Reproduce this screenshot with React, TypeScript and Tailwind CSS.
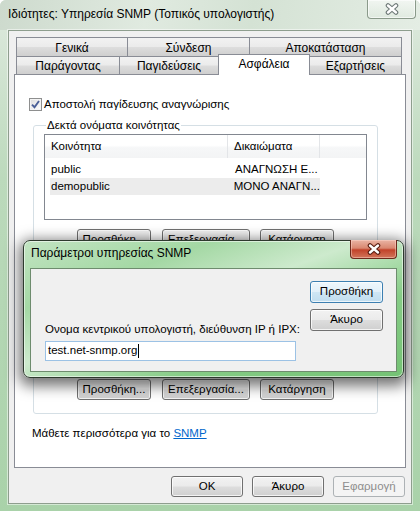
import React from "react";

const FONT = "font-['Liberation_Sans','Noto_Sans',sans-serif]";

const btn =
  "flex items-center justify-center rounded-[3px] border border-[#707070] bg-[linear-gradient(to_bottom,#f2f2f2_0%,#ebebeb_48%,#dddddd_52%,#cfcfcf_100%)] shadow-[inset_0_0_0_1px_rgba(255,255,255,0.75)] text-[11.5px] leading-none text-black whitespace-nowrap";

function XGlyph({ outline }: { outline: string }) {
  return (
    <svg width="14" height="12" viewBox="0 0 14 12">
      <path d="M3 2.5 L11 9.5 M11 2.5 L3 9.5" stroke={outline} strokeWidth="4.6" strokeLinecap="round" fill="none" />
      <path d="M3 2.5 L11 9.5 M11 2.5 L3 9.5" stroke="#ffffff" strokeWidth="2.4" strokeLinecap="round" fill="none" />
    </svg>
  );
}

function Tab({ label, w, first, selected }: { label: string; w: string; first?: boolean; selected?: boolean }) {
  if (selected) {
    return (
      <div
        className={`relative z-10 -ml-px -mt-[2px] flex h-[21px] ${w} items-start justify-center border-x border-t border-[#898c95] bg-white pt-[2px] text-[12px] leading-[15px]`}
      >
        {label}
      </div>
    );
  }
  return (
    <div
      className={`${first ? "" : "-ml-px"} flex h-full ${w} items-center justify-center border-x border-t border-[#898c95] bg-[linear-gradient(to_bottom,#f2f2f2_0%,#ebebeb_48%,#dddddd_52%,#cfcfcf_100%)] pt-[1px] text-[12px] leading-none`}
    >
      {label}
    </div>
  );
}

function ButtonRow() {
  return (
    <div className="ml-[33px] flex h-[21px]">
      <div className={`${btn} w-[74px]`}>Προσθήκη...</div>
      <div className={`${btn} ml-[11px] w-[88px]`}>Επεξεργασία...</div>
      <div className={`${btn} ml-[10px] w-[74px]`}>Κατάργηση</div>
    </div>
  );
}

export default function App() {
  return (
    <div
      className={`relative h-[511px] w-[420px] overflow-hidden rounded-t-[6px] ${FONT} text-[11.5px] text-black bg-[linear-gradient(to_bottom,#d2e0d2_0%,#d9e7d9_6%,#bcdabc_35%,#a9d2a9_100%)]`}
    >
      {/* title bar */}
      <div className="flex h-[30px] items-start justify-between bg-[linear-gradient(100deg,#cddacd_0%,#e0eae0_35%,#d4e2d4_60%,#e4ede4_100%)]">
        <div className="whitespace-nowrap pl-[8px] pt-[7px] text-[12px] leading-[15px]">
          Ιδιότητες: Υπηρεσία SNMP (Τοπικός υπολογιστής)
        </div>
        <div className="mr-[4px] flex h-[19px] w-[49px] items-center justify-center rounded-b-[4px] border-x border-b border-[#8a9a8a] bg-[linear-gradient(to_bottom,rgba(255,255,255,0.55),rgba(220,232,220,0.4))] shadow-[inset_0_0_0_1px_rgba(255,255,255,0.6)]">
          <XGlyph outline="#6f7a78" />
        </div>
      </div>

      {/* client area */}
      <div className="mx-[8px] flex h-[474px] flex-col border border-[#8e9e8e] bg-[#f0f0f0] px-[5px] pt-[6px] shadow-[0_0_0_1px_rgba(255,255,255,0.5)]">
        {/* tabs */}
        <div className="ml-[2px] flex h-[19px]">
          <Tab label="Γενικά" w="w-[112px]" first />
          <Tab label="Σύνδεση" w="w-[123px]" />
          <Tab label="Αποκατάσταση" w="w-[153px]" />
        </div>
        <div className="ml-[2px] flex h-[18px] items-start">
          <Tab label="Παράγοντας" w="w-[104px]" first />
          <Tab label="Παγιδεύσεις" w="w-[100px]" />
          <Tab label="Ασφάλεια" w="w-[92px]" selected />
          <Tab label="Εξαρτήσεις" w="w-[93px]" />
        </div>

        {/* panel */}
        <div className="flex h-[394px] flex-col border border-[#898c95] bg-white">
          <div className="ml-[14px] mt-[22px] flex items-center">
            <div className="flex h-[13px] w-[13px] items-center justify-center border border-[#8e8f8f] bg-[linear-gradient(135deg,#dcdcdc,#ffffff)] shadow-[inset_0_0_0_1px_#f4f4f4]">
              <svg width="9" height="9" viewBox="0 0 9 9">
                <path d="M1 4.6 L3.5 7.2 L8 1" stroke="#4a5f97" strokeWidth="1.9" fill="none" />
              </svg>
            </div>
            <span className="ml-[2px] whitespace-nowrap leading-[15px]">Αποστολή παγίδευσης αναγνώρισης</span>
          </div>

          <fieldset className="ml-[18px] mt-[6px] w-[345px] rounded-[3px] border border-[#d5dfe5] px-[10px] pb-[13px]">
            <legend className="ml-[2px] whitespace-nowrap bg-white px-[1px] leading-[15px]">Δεκτά ονόματα κοινότητας</legend>
            <div className="mt-[1px] h-[86px] w-[323px] border border-[#828790] bg-white">
              <div className="flex h-[23px] items-center bg-[linear-gradient(to_bottom,#ffffff_0%,#ffffff_45%,#f6f7f8_55%,#f3f4f5_100%)]">
                <div className="flex h-full w-[183px] items-center border-r border-[#e3e5e8] pl-[6px]">Κοινότητα</div>
                <div className="flex h-full w-[92px] items-center border-r border-[#e3e5e8] pl-[6px]">Δικαιώματα</div>
              </div>
              <div className="pl-[5px] pt-[3px]">
                <div className="flex h-[17px] w-[270px] items-center whitespace-nowrap">
                  <div className="w-[179px] pl-[1px]">public</div>
                  <div className="pl-[6px]">ΑΝΑΓΝΩΣΗ Ε...</div>
                </div>
                <div className="flex h-[17px] w-[270px] items-center whitespace-nowrap bg-[#ececec]">
                  <div className="w-[179px] pl-[1px]">demopublic</div>
                  <div className="pl-[6px]">ΜΟΝΟ ΑΝΑΓΝ...</div>
                </div>
              </div>
            </div>
            <div className="mt-[9px]">
              <ButtonRow />
            </div>
            <div className="mt-[129px]">
              <ButtonRow />
            </div>
          </fieldset>

          <div className="ml-[17px] mt-[12px] whitespace-nowrap leading-[15px]">
            Μάθετε περισσότερα για το{" "}
            <span className="text-[#0066cc] underline">SNMP</span>
          </div>
        </div>

        {/* bottom buttons */}
        <div className="mt-[8px] flex h-[21px] justify-end gap-[9px] pr-[1px]">
          <div className={`${btn} w-[72px]`}>OK</div>
          <div className={`${btn} w-[72px]`}>Άκυρο</div>
          <div className="flex w-[72px] items-center justify-center rounded-[3px] border border-[#adb2b5] bg-[#f4f4f4] leading-none text-[#8d8d8d]">
            Εφαρμογή
          </div>
        </div>
      </div>

      {/* overlay dialog */}
      <div className="absolute left-[23px] top-[240px] flex h-[138px] w-[381px] flex-col rounded-[7px] border border-[#2e3a2e] bg-[linear-gradient(160deg,#c2e4c2_0%,#a4d8a4_25%,#cdeacd_45%,#86cc86_70%,#74c274_100%)] shadow-[0_4px_14px_4px_rgba(0,0,0,0.55),inset_0_0_0_1px_rgba(255,255,255,0.55)]">
        <div className="flex h-[27px] items-start justify-between">
          <div className="whitespace-nowrap pl-[7px] pt-[5px] text-[12px] leading-[15px] text-black">Παράμετροι υπηρεσίας SNMP</div>
          <div className="-mt-px mr-[6px] flex h-[19px] w-[47px] items-center justify-center rounded-b-[4px] border-x border-b border-[#6d2a1c] bg-[linear-gradient(to_bottom,#eab4a4_0%,#d98871_45%,#c2432a_55%,#d2765a_100%)] shadow-[inset_0_0_0_1px_rgba(255,220,210,0.45)]">
            <XGlyph outline="#5a1e12" />
          </div>
        </div>
        <div className="mx-[6px] flex h-[104px] border border-[#6e8c6e] bg-[#f0f0f0]">
          <div className="flex flex-1 flex-col justify-end pb-[10px] pl-[14px]">
            <div className="whitespace-nowrap leading-[15px]">Ονομα κεντρικού υπολογιστή, διεύθυνση IP ή IPX:</div>
            <div className="mt-[4px] flex h-[20px] w-[251px] items-center border border-[#9cc2e5] bg-white pl-[2px] leading-none">
              <span>test.net-snmp.org</span>
              <span className="ml-px inline-block h-[14px] w-px bg-black" />
            </div>
          </div>
          <div className="flex flex-col gap-[6px] pr-[13px] pt-[12px]">
            <div className="flex h-[22px] w-[73px] items-center justify-center rounded-[3px] border border-[#3c7fb1] bg-[linear-gradient(to_bottom,#eef7fc_0%,#e2f0f9_48%,#cfe6f4_52%,#c0ddef_100%)] shadow-[inset_0_0_0_1px_rgba(255,255,255,0.7)] leading-none">
              Προσθήκη
            </div>
            <div className={`${btn} h-[22px] w-[73px]`}>Άκυρο</div>
          </div>
        </div>
      </div>
    </div>
  );
}
